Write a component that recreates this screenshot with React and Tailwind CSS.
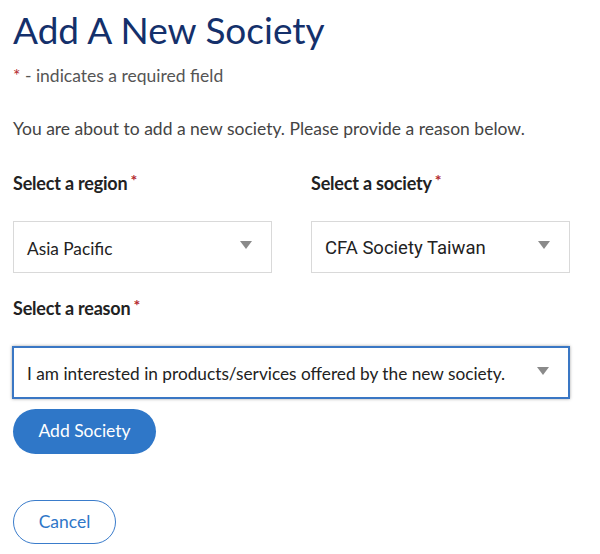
import React from "react";

function Caret() {
  return (
    <svg width="12" height="8" viewBox="0 0 12 8" className="shrink-0">
      <path d="M0 0 L12 0 L6 8 Z" fill="#8a8a8a" />
    </svg>
  );
}

function Label({ children }) {
  return (
    <div className="text-[18px] font-bold text-[#222] h-[26px] flex items-center tracking-[-0.2px]">
      {children}
      <span className="text-[#b3282d] text-[16px] ml-[3px] -mt-[6px]">*</span>
    </div>
  );
}

function SelectBox({ value, active, wide, font }) {
  return (
    <div
      className={
        "flex items-center justify-between pl-[13px] pr-[19px] bg-white " +
        (active
          ? "h-[53px] border-2 border-[#3a77c4] shadow-[0_0_3px_rgba(0,0,0,0.35)]"
          : "h-[52px] border border-[#d9d9d9]") +
        (wide ? " w-[558px]" : " w-[259px]")
      }
    >
      <span className={"text-[#222] pt-[3px] " + (font || "text-[17.25px]")}>{value}</span>
      <span className="-mt-[4px]"><Caret /></span>
    </div>
  );
}

export default function App() {
  const [region] = React.useState("Asia Pacific");
  const [society] = React.useState("CFA Society Taiwan");

  return (
    <div className="bg-white min-h-screen pl-[13px] pt-[6px] text-[#333]" style={{ fontFamily: "Lato, 'Noto Sans', sans-serif" }}>
      <h1 className="text-[37px] leading-[48px] text-[#14306b]">Add A New Society</h1>
      <p className="mt-[10px] text-[17.5px] leading-[24px] text-[#555]">
        <span className="text-[#b3282d]">*</span> - indicates a required field
      </p>
      <p className="mt-[29px] text-[17.5px] leading-[24px] text-[#444]">
        You are about to add a new society. Please provide a reason below.
      </p>

      {/* region + society */}
      <div className="flex gap-[39px] mt-[29px]">
        <div className="flex flex-col gap-[25px]">
          <Label>Select a region</Label>
          <SelectBox value={region} />
        </div>
        <div className="flex flex-col gap-[25px]">
          <Label>Select a society</Label>
          <SelectBox value={society} font="font-['Roboto'] text-[18.5px]" />
        </div>
      </div>

      <div className="flex flex-col gap-[25px] mt-[22px]">
        <Label>Select a reason</Label>
        <div className="-ml-[1px]">
          <SelectBox value="I am interested in products/services offered by the new society." active wide />
        </div>
      </div>

      <button className="mt-[10px] w-[143px] h-[45px] rounded-full bg-[#2f77c8] text-white text-[17.5px] block">
        Add Society
      </button>

      <button className="mt-[46px] w-[103px] h-[44px] rounded-full border border-[#3a7ccb] text-[#2f77c8] text-[17.5px] block">
        Cancel
      </button>
    </div>
  );
}
